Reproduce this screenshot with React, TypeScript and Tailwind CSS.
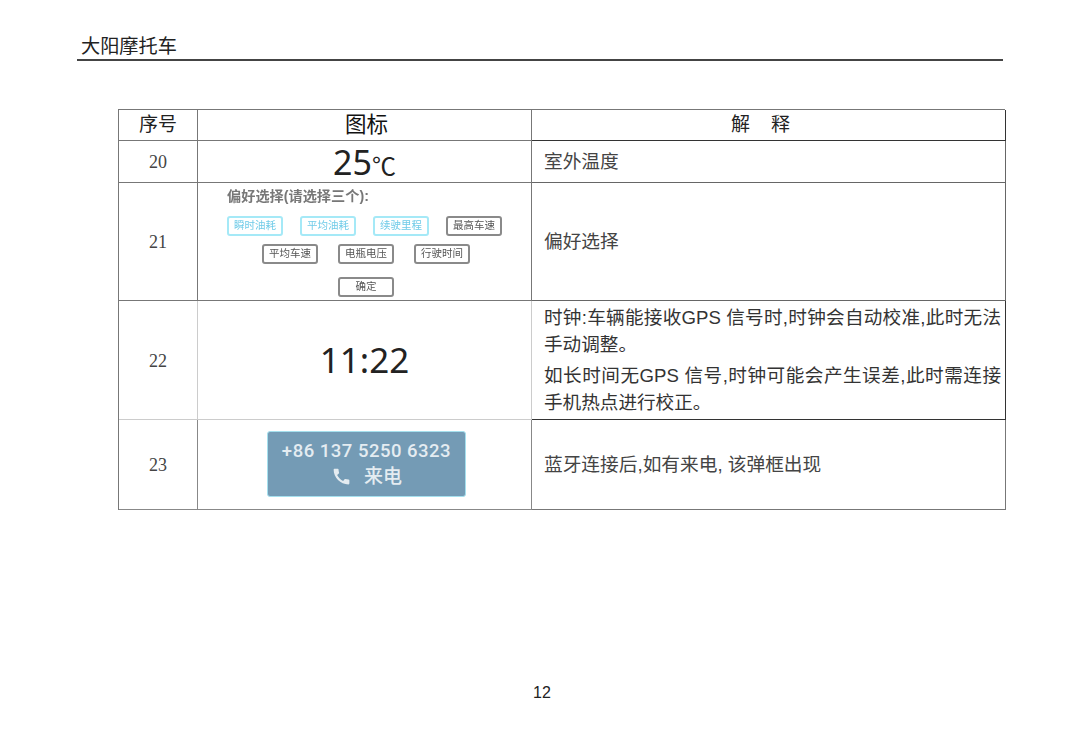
import { MdCall } from 'react-icons/md'

const cjk = "font-['Liberation_Sans','Noto_Sans_CJK_SC',sans-serif]"

const Chip = ({ label, active }: { label: string; active?: boolean }) => (
  <div
    className={
      active
        ? 'flex h-[20px] w-[56px] items-center justify-center rounded-[3px] border-2 border-[#a5e9f7] text-[10.5px] text-[#6fcbe8]'
        : 'flex h-[20px] w-[56px] items-center justify-center rounded-[3px] border-2 border-[#8a8a8a] text-[10.5px] text-[#555]'
    }
  >
    {label}
  </div>
)

const App = () => {
  return (
    <div className={`flex h-[744px] w-[1080px] flex-col bg-white text-[#333] ${cjk}`}>
      <div className="ml-[77px] mt-[34px] w-[926px] border-b-2 border-[#444] pl-[4px] text-[19.2px] leading-[25px] text-[#222]">
        大阳摩托车
      </div>

      <div className="ml-[118px] mt-[48px] grid w-[887px] grid-cols-[79px_334px_474px] grid-rows-[31px_42px_118px_119px_90px] border-l border-t border-[#777]">
        <div className="flex items-center justify-center border-b border-r border-[#777] text-[19px] text-[#222]">序号</div>
        <div className="flex items-center justify-center border-b border-r border-[#777] pl-[4px] text-[21.5px] text-[#111]">图标</div>
        <div className="flex items-center justify-center gap-[21px] border-b border-r border-[#333] pr-[16px] text-[19px] text-[#222]">
          <span>解</span>
          <span>释</span>
        </div>

        <div className="flex items-center justify-center border-b border-r border-[#777] pt-[2px] font-['Liberation_Serif',serif] text-[18px] text-[#444]">20</div>
        <div className="flex items-center justify-center border-b border-r border-[#777] font-['Noto_Sans',sans-serif] text-[#222]">
          <span className="text-[34px] leading-none">25</span>
          <span className="mt-[6px] font-['Noto_Sans_CJK_SC',sans-serif] text-[24px] leading-none">℃</span>
        </div>
        <div className="flex items-center border-b border-r border-[#666] pl-[12px] pt-[2px] text-[18.7px] text-[#444]">室外温度</div>

        <div className="flex items-center justify-center border-b border-r border-[#777] pt-[2px] font-['Liberation_Serif',serif] text-[18px] text-[#444]">21</div>
        <div className="flex flex-col border-b border-r border-[#777] pl-[29px] pr-[26px] pt-[3px] blur-[0.5px]">
          <div className="text-[14.2px] font-bold leading-[20px] text-[#777]">偏好选择(请选择三个):</div>
          <div className="mt-[10px] flex gap-[17px]">
            <Chip label="瞬时油耗" active />
            <Chip label="平均油耗" active />
            <Chip label="续驶里程" active />
            <Chip label="最高车速" />
          </div>
          <div className="mt-[8px] flex justify-center gap-[20px]">
            <Chip label="平均车速" />
            <Chip label="电瓶电压" />
            <Chip label="行驶时间" />
          </div>
          <div className="mt-[13px] flex justify-center">
            <Chip label="确定" />
          </div>
        </div>
        <div className="flex items-center border-b border-r border-[#666] pl-[12px] pt-[2px] text-[18.7px] text-[#444]">偏好选择</div>

        <div className="flex items-center justify-center border-b border-r border-[#ccc] pt-[2px] font-['Liberation_Serif',serif] text-[18px] text-[#444]">22</div>
        <div className="flex items-center justify-center border-b border-r border-[#ccc] pb-[2px] font-['Noto_Sans',sans-serif] text-[35px] leading-none text-[#222]">11:22</div>
        <div className="flex flex-col justify-center gap-[4px] border-b border-r border-[#333] pl-[12px] pr-[4px] text-justify text-[18.6px] leading-[27px] text-[#333]">
          <p>时钟:车辆能接收GPS 信号时,时钟会自动校准,此时无法手动调整。</p>
          <p>如长时间无GPS 信号,时钟可能会产生误差,此时需连接手机热点进行校正。</p>
        </div>

        <div className="flex items-center justify-center border-b border-r border-[#888] pt-[2px] font-['Liberation_Serif',serif] text-[18px] text-[#444]">23</div>
        <div className="flex items-center justify-center border-b border-r border-[#888] pl-[4px] pb-[2px]">
          <div className="flex h-[66px] w-[199px] flex-col items-center justify-center rounded-[3px] border border-[#a5e0ee] bg-[#749bb5] font-['Roboto','Noto_Sans_CJK_SC',sans-serif] font-medium text-[#e4ecf1]">
            <div className="text-[18.5px] leading-[26px] tracking-[0.5px]">+86 137 5250 6323</div>
            <div className="flex items-center gap-[12px] text-[19px] leading-[26px]">
              <MdCall className="h-[21px] w-[21px]" />
              <span>来电</span>
            </div>
          </div>
        </div>
        <div className="flex items-center border-b border-r border-[#777] pl-[12px] pt-[2px] text-[18.7px] text-[#444]">蓝牙连接后,如有来电, 该弹框出现</div>
      </div>

      <div className="mt-auto pb-[42px] pl-[4px] text-center font-['Liberation_Sans',sans-serif] text-[16px] leading-[18px] text-[#222]">12</div>
    </div>
  )
}

export default App
